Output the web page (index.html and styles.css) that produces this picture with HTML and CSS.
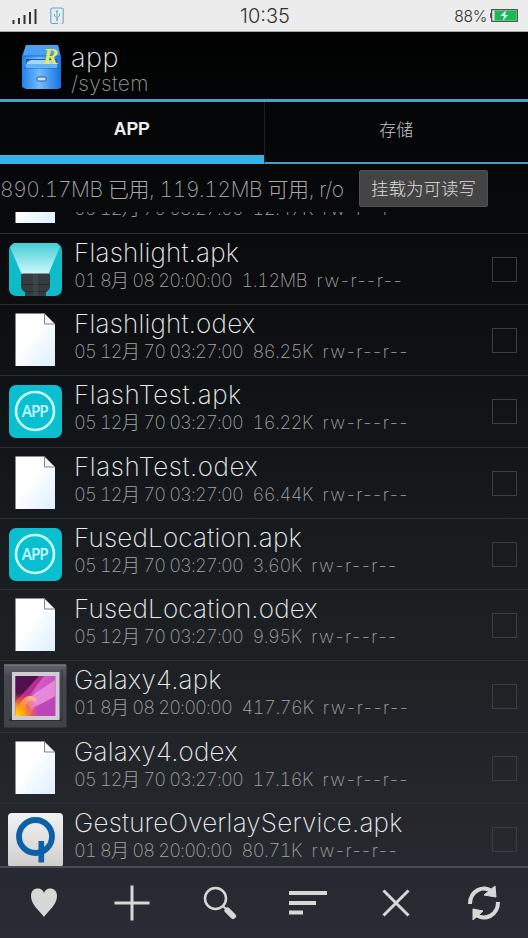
FILE: index.html
```html
<!DOCTYPE html>
<html lang="zh-CN">
<head>
<meta charset="utf-8">
<title>app</title>
<link rel="stylesheet" href="styles.css">
</head>
<body>
<svg class="defs" width="0" height="0" aria-hidden="true">
  <defs>
    <linearGradient id="paper" x1="0" y1="0" x2="1" y2="1"><stop offset=".4" stop-color="#fff"/><stop offset="1" stop-color="#dcefff"/></linearGradient>
    <linearGradient id="beam" x1="0" y1="0" x2="0" y2="1"><stop offset="0" stop-color="#45cbd5"/><stop offset="1" stop-color="#d2fbff"/></linearGradient>
    <linearGradient id="blue" x1="0" y1="0" x2="1" y2="0"><stop offset="0" stop-color="#2284e8"/><stop offset=".45" stop-color="#6fbcff"/><stop offset="1" stop-color="#1672df"/></linearGradient>
    <linearGradient id="photo" x1="0" y1=".3" x2="1" y2=".6"><stop offset="0" stop-color="#8e126b"/><stop offset=".5" stop-color="#d65cc8"/><stop offset="1" stop-color="#c04abc"/></linearGradient>
    <radialGradient id="glow" cx="0" cy="1" r=".6"><stop offset="0" stop-color="#ffe800"/><stop offset=".4" stop-color="#ff9a10"/><stop offset="1" stop-color="#ff5020" stop-opacity="0"/></radialGradient>
    <linearGradient id="tile" x1="0" y1="0" x2="0" y2="1"><stop offset="0" stop-color="#f3f2f2"/><stop offset="1" stop-color="#cfcccc"/></linearGradient>
    <linearGradient id="frame" x1="0" y1="0" x2="0" y2="1"><stop offset="0" stop-color="#63636d"/><stop offset=".2" stop-color="#484851"/><stop offset="1" stop-color="#41414a"/></linearGradient>
    <symbol id="file" viewBox="0 0 70 70"><path d="M15.500 8.500H44.500L55 19V61H15.500Z" fill="url(#paper)"/><path d="M44.500 8.500V19H55Z" fill="#f6f6f6" stroke="#777" stroke-width=".9"/></symbol>
    <symbol id="app" viewBox="0 0 70 70"><rect x="9" y="9" width="53" height="53" rx="7" fill="#09bfd0"/><circle cx="35" cy="35" r="19" fill="none" stroke="#c8fbff" stroke-width="2.600"/><text x="35.300" y="40.500" text-anchor="middle" class="app-text" textLength="27">APP</text></symbol>
    <symbol id="flash" viewBox="0 0 70 70"><rect x="9" y="9" width="53" height="53" rx="7" fill="#0dbbc9"/><path d="M14 9H57L60 13L48 41H22L10 13Z" fill="url(#beam)"/><path d="M21 41Q21 39.500 23 39.500H48Q50 39.500 50 41V52Q50 56 46 58V62H25V58Q21 56 21 52Z" fill="#343c40"/><path d="M21 50.500H50M25 57.500H46" stroke="#20282b" stroke-width="1"/><path d="M33 40H38V62H33Z" fill="#465054" opacity=".5"/></symbol>
    <symbol id="gallery" viewBox="0 0 70 70"><rect x="4" y="3.500" width="62.500" height="63" rx="1" fill="url(#frame)"/><path d="M4 4H66" stroke="#85858d"/><path d="M9 59H62" stroke="#2b2b33" stroke-width="2"/><path d="M62 9V61" stroke="#34343c"/><rect x="12" y="11" width="47.500" height="48" fill="#cfccd4"/><rect x="15.500" y="15" width="40" height="40" fill="url(#photo)"/><path d="M15.500 15H39L30 28L15.500 41Z" fill="#50114f"/><path d="M39 15H44L25 40L16 46V40Z" fill="#b62c91"/><path d="M55 19L34 33L26 42L32 49L55 35Z" fill="#ee9ae2" opacity=".75"/><path d="M34 46L55 36V55H30Z" fill="#b943b7" opacity=".75"/><path d="M16 52Q22 34 31 35Q38 37 36 41Q30 37 26 44L25 55H16Z" fill="#ffb48c"/><rect x="15.500" y="15" width="40" height="40" fill="url(#glow)"/></symbol>
    <symbol id="q" viewBox="0 0 70 70"><rect x="8" y="9" width="55" height="54.500" rx="4" fill="url(#tile)"/><circle cx="35.500" cy="32.500" r="16.500" fill="none" stroke="#0c60aa" stroke-width="5.800"/><path d="M41.300 37V58.500" stroke="#0c60aa" stroke-width="5.600"/></symbol>
  </defs>
</svg>
<div class="screen">
  <header class="status">
    <div class="status-left">
      <svg width="26" height="18" viewBox="0 0 26 18"><path d="M1.500 13V17M7 11V17M12.500 8V17M18 5V17M23.500 2V17" stroke="#333" stroke-width="2"/></svg>
      <svg width="14" height="18" viewBox="0 0 14 18"><path d="M8 16.500H2.500Q.8 16.500.8 15V2.500Q.8 1 2.500 1H11.500Q13.200 1 13.200 2.500V15Q13.200 16.500 11.500 16.500" fill="none" stroke="#55acd0" stroke-width="1.100"/><path d="M7 4V13M4.500 7V9L7 11L9.500 9V6.500" fill="none" stroke="#55acd0" stroke-width="1"/><path d="M5.500 5L7 3L8.500 5Z" fill="#55acd0"/><circle cx="7" cy="13" r="1" fill="#55acd0"/></svg>
    </div>
    <div class="time">10:35</div>
    <div class="status-right"><span class="percent">88%</span>
      <svg width="28" height="13" viewBox="0 0 28 13"><path d="M.8 4V9" stroke="#555" stroke-width="1.400"/><rect x="1.700" y=".7" width="25.600" height="11.600" fill="#eee" stroke="#444" stroke-width="1.200"/><rect x="4.500" y="1.500" width="22" height="10" fill="#17ba54"/><path d="M16 1.500L10.500 7H14L13 11.500L18 6H15Z" fill="#fff"/></svg>
    </div>
  </header>
  <div class="titlebar">
    <svg class="logo" width="42" height="48" viewBox="0 0 42 48"><path d="M5 1H37L40 12V44L37 45H5L1 43V12Z" fill="url(#blue)"/><path d="M5 1H37L39 12H2Z" fill="#4aa0f1"/><path d="M2 12H39M3 24H39" stroke="#1469c8"/><path d="M5 15H36V23H5Z" fill="#175aa8"/><path d="M6 18L10 16H33L36 23H5Z" fill="#a5d3fa"/><path d="M5 20H36V24H5Z" fill="#66b2f7"/><rect x="16" y="33" width="9" height="4" rx="1" fill="#ddd" stroke="#245d9d"/><text x="22" y="20" class="logo-r">R</text></svg>
    <div class="titles"><div class="title">app</div><div class="path">/system</div></div>
  </div>
  <nav class="tabs"><div class="tab active">APP</div><div class="tab">存储</div></nav>
  <div class="mount"><span class="usage">890.17MB 已用, 119.12MB 可用, r/o</span><button class="mount-button">挂载为可读写</button></div>
  <main class="list">
    <div class="row"><svg class="icon"><use href="#file"/></svg><div class="info"><div class="name"></div><div class="meta"><span class="date">05 12月 70 03:27:00</span><span class="size">12.47K</span><span class="perm">rw-r--r--</span></div></div></div>
    <div class="row"><svg class="icon"><use href="#flash"/></svg><div class="info"><div class="name">Flashlight.apk</div><div class="meta"><span class="date">01 8月 08 20:00:00</span><span class="size">1.12MB</span><span class="perm">rw-r--r--</span></div></div><i class="check"></i></div>
    <div class="row"><svg class="icon"><use href="#file"/></svg><div class="info"><div class="name">Flashlight.odex</div><div class="meta"><span class="date">05 12月 70 03:27:00</span><span class="size">86.25K</span><span class="perm">rw-r--r--</span></div></div><i class="check"></i></div>
    <div class="row"><svg class="icon"><use href="#app"/></svg><div class="info"><div class="name wide">FlashTest.apk</div><div class="meta"><span class="date">05 12月 70 03:27:00</span><span class="size">16.22K</span><span class="perm">rw-r--r--</span></div></div><i class="check"></i></div>
    <div class="row"><svg class="icon"><use href="#file"/></svg><div class="info"><div class="name wide">FlashTest.odex</div><div class="meta"><span class="date">05 12月 70 03:27:00</span><span class="size">66.44K</span><span class="perm">rw-r--r--</span></div></div><i class="check"></i></div>
    <div class="row"><svg class="icon"><use href="#app"/></svg><div class="info"><div class="name">FusedLocation.apk</div><div class="meta"><span class="date">05 12月 70 03:27:00</span><span class="size">3.60K</span><span class="perm">rw-r--r--</span></div></div><i class="check"></i></div>
    <div class="row"><svg class="icon"><use href="#file"/></svg><div class="info"><div class="name">FusedLocation.odex</div><div class="meta"><span class="date">05 12月 70 03:27:00</span><span class="size">9.95K</span><span class="perm">rw-r--r--</span></div></div><i class="check"></i></div>
    <div class="row"><svg class="icon"><use href="#gallery"/></svg><div class="info"><div class="name">Galaxy4.apk</div><div class="meta"><span class="date">01 8月 08 20:00:00</span><span class="size">417.76K</span><span class="perm">rw-r--r--</span></div></div><i class="check"></i></div>
    <div class="row"><svg class="icon"><use href="#file"/></svg><div class="info"><div class="name">Galaxy4.odex</div><div class="meta"><span class="date">05 12月 70 03:27:00</span><span class="size">17.16K</span><span class="perm">rw-r--r--</span></div></div><i class="check"></i></div>
    <div class="row"><svg class="icon"><use href="#q"/></svg><div class="info"><div class="name">GestureOverlayService.apk</div><div class="meta"><span class="date">01 8月 08 20:00:00</span><span class="size">80.71K</span><span class="perm">rw-r--r--</span></div></div><i class="check"></i></div>
  </main>
  <footer class="toolbar">
    <svg viewBox="0 0 40 40"><path d="M20 34C16 28 7 22 7 13C7 7 11 5.500 14 5.500C17 5.500 19 7 20 10C21 7 23 5.500 26 5.500C30 5.500 33 8 33 13C33 22 24 28 20 34Z" fill="#d6d8d8"/></svg>
    <svg viewBox="0 0 40 40"><path d="M20 2.500V37.500M2.500 20H37.500" stroke="#d6d8d8" stroke-width="3"/></svg>
    <svg viewBox="0 0 40 40"><circle cx="15.500" cy="15.500" r="10.500" fill="none" stroke="#d6d8d8" stroke-width="2.500"/><path d="M23 23L27 27" stroke="#d6d8d8" stroke-width="2"/><path d="M27.500 27.500L33 33" stroke="#d6d8d8" stroke-width="6" stroke-linecap="round"/></svg>
    <svg viewBox="0 0 40 40"><path d="M1 10H39M1 20H28M1 29.500H15" stroke="#d6d8d8" stroke-width="4"/></svg>
    <svg viewBox="0 0 40 40"><path d="M7.500 7.500L32.500 32.500M32.500 7.500L7.500 32.500" stroke="#d6d8d8" stroke-width="3"/></svg>
    <svg viewBox="0 0 40 40"><path d="M6 21C6 8 19 1 29 9M34 19C34 32 21 39 11 31" fill="none" stroke="#d6d8d8" stroke-width="4"/><path d="M31 3L32 14L20 12ZM9 37V26L19 28Z" fill="#d6d8d8" stroke="#d6d8d8"/></svg>
  </footer>
</div>
</body>
</html>
```
FILE: styles.css
```css
* { box-sizing: border-box; }
body { margin: 0; font-family: Inter, "Noto Sans CJK SC", sans-serif; font-weight: 200; color: #e8eaea; }
.defs { position: absolute; }
.screen { width: 528px; height: 938px; display: flex; flex-direction: column; overflow: hidden; background: linear-gradient(#000 0, #040506 110px, #090a0c 230px, #111417 410px, #1b1f22 610px, #23272b 800px, #292c34 938px); }
.status { height: 32px; flex: none; display: grid; grid-template-columns: 1fr auto 1fr; align-items: center; padding: 0 10px 0 12px; background: #ececec; border-bottom: 1px solid #aaa; color: #333; }
.status-left { display: flex; gap: 12px; }
.time { font-size: 20px; font-weight: 300; padding-top: 1px; }
.status-right { display: flex; justify-content: flex-end; align-items: center; gap: 3px; }
.percent { font-size: 15.500px; font-weight: 300; letter-spacing: -.2px; padding-top: 1px; }
.titlebar { height: 70px; flex: none; display: flex; border-bottom: 3px solid #459fc7; padding: 12px 0 0 21px; gap: 8px; }
.title { font-size: 27px; line-height: 28px; letter-spacing: .5px; }
.path { font-size: 21px; line-height: 24px; color: #999; letter-spacing: .3px; }
.logo-r { font: italic 700 23px "Liberation Serif", serif; fill: #e8ed51; }
.app-text { font: 600 15.500px "Open Sans", sans-serif; fill: #c8fbff; }
.tabs { height: 62px; flex: none; display: flex; }
.tab { flex: 1; display: flex; align-items: center; justify-content: center; padding-bottom: 8px; font-size: 17px; font-weight: 300; color: #c8c8c8; border-bottom: 2px solid #459fc7; }
.tab.active { font: 700 17.500px "Liberation Sans", sans-serif; color: #eee; padding: 2px 0 0; border-bottom: 9px solid #36b2e7; }
.tab + .tab { border-left: 1px solid #1b1f20; }
.mount { height: 48px; flex: none; display: flex; align-items: center; gap: 14px; white-space: nowrap; }
.usage { font-size: 21px; font-variant-numeric: tabular-nums; letter-spacing: -.4px; color: #aaa; width: 345px; }
.mount-button { width: 129px; height: 37px; border: 1px solid #505050; border-radius: 2px; background: #444; color: #ddd; font: 300 17.500px "Noto Sans CJK SC", sans-serif; padding: 0 0 2px; }
.list { flex: none; height: 656px; overflow: hidden; border-bottom: 2px solid #4a4d55; }
.row { height: 71.300px; display: flex; border-bottom: 1.500px solid #2c2f33; }
.row:first-child { margin-top: -49.600px; }
.icon { width: 70px; height: 70px; flex: none; }
.info { flex: 1; padding: 4px 0 0 4px; white-space: nowrap; }
.name { font-size: 26px; height: 30px; line-height: 30px; letter-spacing: .2px; }
.name.wide { letter-spacing: .55px; }
.meta { display: flex; gap: 9.500px; font-size: 18.300px; line-height: 25px; color: #a2a2a2; }
.date { font-variant-numeric: tabular-nums; letter-spacing: -.87px; }
.size { font-variant-numeric: tabular-nums; letter-spacing: -.5px; }
.perm { letter-spacing: 1.500px; }
.check { width: 25px; height: 25px; margin: 23px 11px 0 0; border: 1.500px solid #3b3e40; }
.toolbar { flex: 1; display: grid; grid-template-columns: repeat(6, 1fr); place-items: center; }
.toolbar svg { width: 40px; height: 40px; }
```
